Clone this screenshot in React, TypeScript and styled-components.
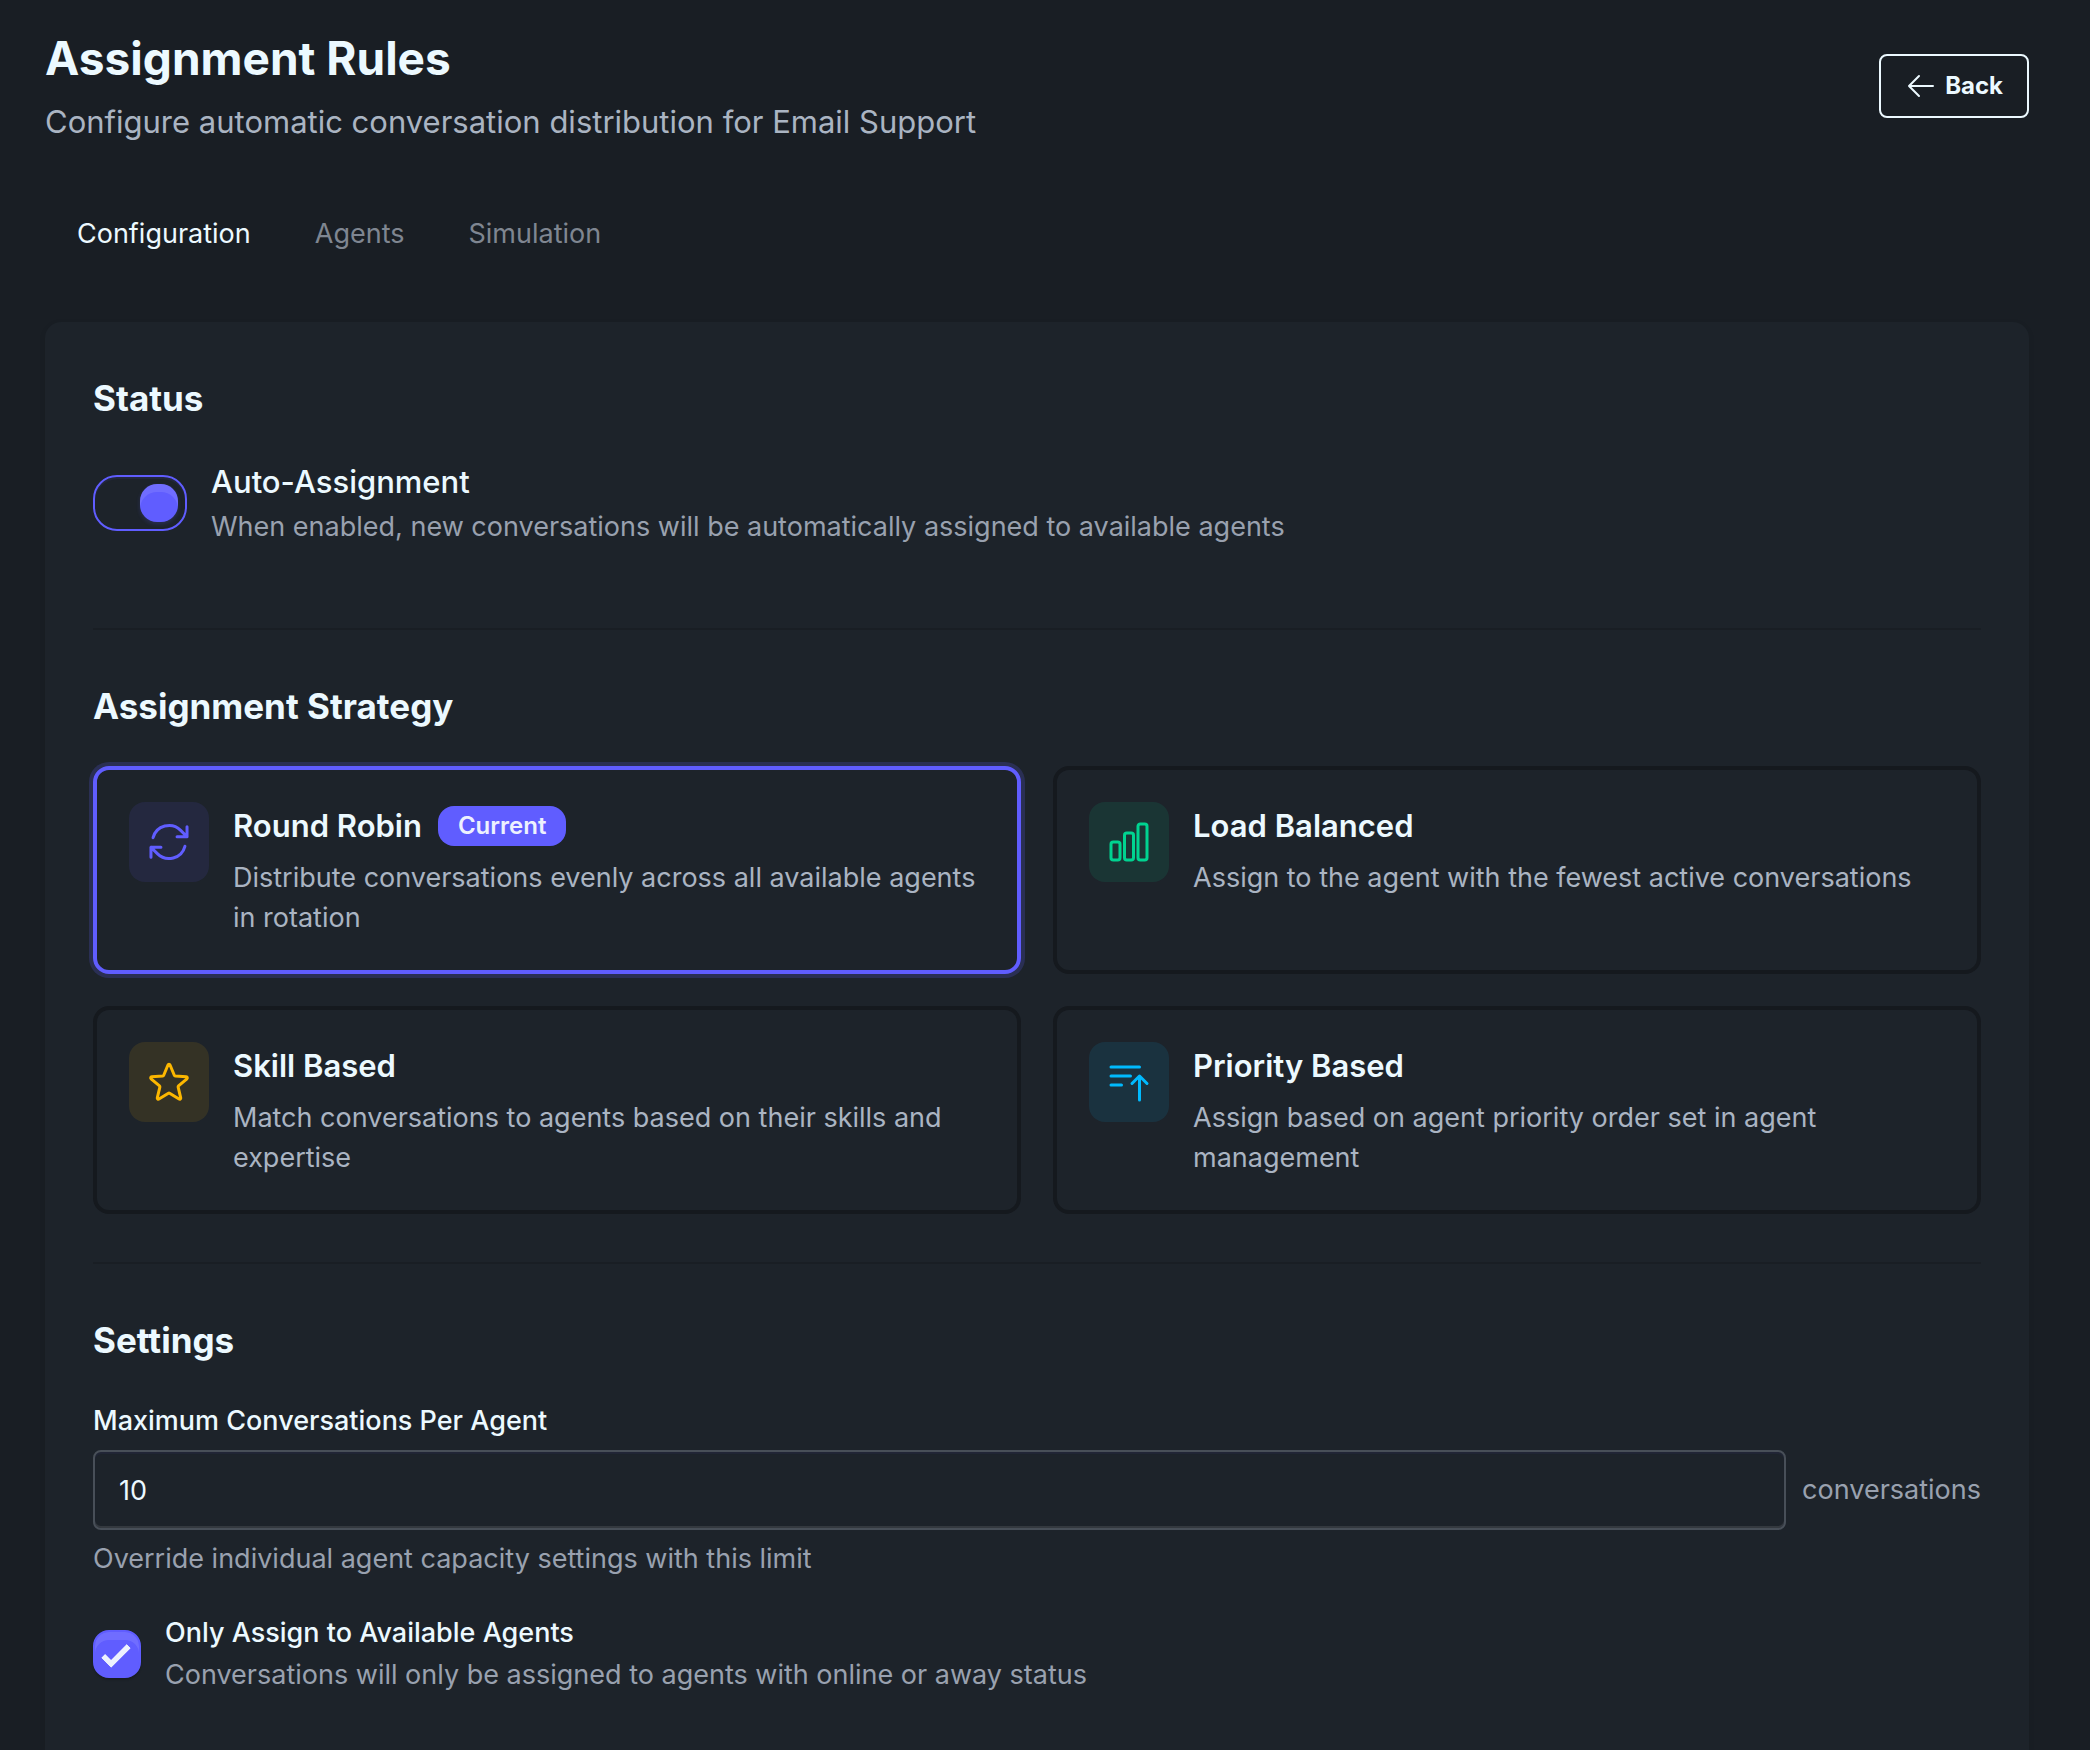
import React, { useState } from "react";
import styled, { createGlobalStyle } from "styled-components";
import {
  HiOutlineArrowLeft,
  HiOutlineArrowPath,
  HiOutlineBarsArrowUp,
  HiOutlineChartBar,
  HiOutlineStar,
} from "react-icons/hi2";

const color = {
  page: "#191e24",
  panel: "#1d232a",
  line: "#191e24",
  outline: "#15191e",
  text: "#ecf9ff",
  soft: "#aab4c2",
  muted: "#99a1af",
  faint: "#7f8691",
  field: "#484f58",
  primary: "#605dff",
};

const GlobalStyle = createGlobalStyle`
  *, *::before, *::after { box-sizing: border-box; }
  body {
    margin: 0;
    background: ${color.page};
    color: ${color.text};
    font-family: Inter, "Liberation Sans", sans-serif;
    font-size: 27px;
    line-height: 42px;
  }
  h1, h2, h3, p { margin: 0; }
  button, input { font: inherit; color: inherit; }
`;

const Page = styled.main`
  display: flex;
  flex-direction: column;
  gap: 48px;
  min-height: 100vh;
  padding: 26px 61px 0 45px;
`;

const Header = styled.header`
  display: flex;
  align-items: center;
  justify-content: space-between;
  gap: 32px;
`;

const Title = styled.h1`
  margin-bottom: 8px;
  font-size: 46px;
  line-height: 64px;
  font-weight: 700;
`;

const Subtitle = styled.p`
  font-size: 31px;
  line-height: 48px;
  color: ${color.soft};
`;

const BackButton = styled.button`
  display: flex;
  align-items: center;
  gap: 8px;
  height: 64px;
  padding: 0 24px;
  border: 2px solid ${color.text};
  border-radius: 8px;
  background: transparent;
  font-size: 24px;
  font-weight: 700;
  cursor: pointer;
`;

const Tabs = styled.nav`
  display: flex;
`;

const Tab = styled.button<{ $active: boolean }>`
  height: 80px;
  padding: 0 32px;
  border: 0;
  background: transparent;
  color: ${(p) => (p.$active ? color.text : color.faint)};
  cursor: pointer;
`;

const Panel = styled.div`
  flex: 1;
  padding: 48px;
  border-radius: 16px 16px 0 0;
  background: ${color.panel};
  box-shadow: 0 2px 6px rgba(0, 0, 0, 0.08);
`;

const Section = styled.section`
  & + & {
    margin-top: 48px;
    padding-top: 48px;
    border-top: 2px solid ${color.line};
  }
`;

const Heading = styled.h2`
  margin-bottom: 32px;
  font-size: 35px;
  line-height: 56px;
  font-weight: 700;
`;

const SwitchRow = styled.div`
  display: flex;
  align-items: center;
  gap: 24px;
  padding-bottom: 32px;
`;

const Switch = styled.input`
  appearance: none;
  flex: none;
  display: grid;
  align-items: center;
  justify-content: start;
  width: 94px;
  height: 56px;
  margin: 0;
  padding: 0 7px;
  border: 2px solid ${color.faint};
  border-radius: 24px;
  box-shadow: inset 0 2px 1px rgba(96, 93, 255, 0.1);
  cursor: pointer;

  &::before {
    content: "";
    width: 38px;
    height: 38px;
    border-radius: 17px;
    background: ${color.faint};
  }

  &:checked {
    justify-content: end;
    border-color: ${color.primary};
  }

  &:checked::before {
    background: ${color.primary};
    box-shadow: inset 0 8px 0 rgba(255, 255, 255, 0.1), 0 2px 4px rgba(96, 93, 255, 0.2);
  }
`;

const SwitchLabel = styled.label`
  display: block;
  font-size: 31px;
  line-height: 48px;
  font-weight: 500;
`;

const Hint = styled.p`
  color: ${color.muted};
`;

const StrategyGrid = styled.div`
  display: grid;
  grid-template-columns: repeat(2, minmax(0, 1fr));
  gap: 32px;
`;

const StrategyCard = styled.button<{ $selected: boolean }>`
  display: flex;
  align-items: flex-start;
  gap: 24px;
  padding: 32px;
  border: 4px solid ${(p) => (p.$selected ? color.primary : color.outline)};
  border-radius: 16px;
  background: transparent;
  box-shadow: ${(p) => (p.$selected ? "0 0 0 4px rgba(96, 93, 255, 0.2)" : "none")};
  text-align: left;
  cursor: pointer;
`;

const IconTile = styled.span<{ $tint: string }>`
  flex: none;
  display: grid;
  place-items: center;
  width: 80px;
  height: 80px;
  border-radius: 16px;
  color: ${(p) => p.$tint};
  background: color-mix(in srgb, ${(p) => p.$tint} 10%, transparent);
`;

const StrategyBody = styled.span`
  display: flex;
  flex-direction: column;
  gap: 8px;
  min-width: 0;
`;

const StrategyName = styled.span`
  display: flex;
  align-items: center;
  gap: 16px;
  font-size: 31px;
  line-height: 48px;
  font-weight: 600;
`;

const Badge = styled.span`
  padding: 0 20px;
  border-radius: 16px;
  background: ${color.primary};
  color: #edf1fe;
  font-size: 24px;
  line-height: 40px;
`;

const StrategyText = styled.span`
  line-height: 40px;
  color: ${color.soft};
`;

const Field = styled.div`
  display: flex;
  flex-direction: column;
  gap: 8px;
  margin-bottom: 32px;
`;

const Label = styled.label`
  display: block;
  font-weight: 500;
`;

const InputRow = styled.div`
  display: flex;
  align-items: center;
  gap: 16px;
`;

const NumberInput = styled.input`
  flex: 1;
  min-width: 0;
  height: 80px;
  padding: 0 24px;
  border: 2px solid ${color.field};
  border-radius: 8px;
  background: transparent;
  box-shadow: inset 0 -2px 0 rgba(255, 255, 255, 0.1), inset 0 2px 1px rgba(96, 93, 255, 0.06);
`;

const Unit = styled.span`
  color: ${color.muted};
`;

const CheckRow = styled.div`
  display: flex;
  align-items: center;
  gap: 24px;
`;

const Checkbox = styled.input`
  appearance: none;
  flex: none;
  display: grid;
  place-items: center;
  width: 48px;
  height: 48px;
  margin: 0;
  border: 2px solid ${color.field};
  border-radius: 16px;
  cursor: pointer;

  &:checked {
    border-color: ${color.primary};
    background: ${color.primary};
    box-shadow: inset 0 8px 0 rgba(255, 255, 255, 0.1), 0 2px 2px rgba(0, 0, 0, 0.2);
  }

  &:checked::before {
    content: "";
    width: 28px;
    height: 28px;
    background: #edf1fe;
    clip-path: polygon(20% 100%, 20% 80%, 50% 80%, 50% 0%, 70% 0%, 70% 100%);
    transform: rotate(45deg);
  }
`;

const tabs = ["Configuration", "Agents", "Simulation"];

const strategies = [
  {
    name: "Round Robin",
    text: "Distribute conversations evenly across all available agents in rotation",
    tint: "#605dff",
    Icon: HiOutlineArrowPath,
  },
  {
    name: "Load Balanced",
    text: "Assign to the agent with the fewest active conversations",
    tint: "#00d390",
    Icon: HiOutlineChartBar,
  },
  {
    name: "Skill Based",
    text: "Match conversations to agents based on their skills and expertise",
    tint: "#fcb700",
    Icon: HiOutlineStar,
  },
  {
    name: "Priority Based",
    text: "Assign based on agent priority order set in agent management",
    tint: "#00bafe",
    Icon: HiOutlineBarsArrowUp,
  },
];

export default function App() {
  const [tab, setTab] = useState("Configuration");
  const [strategy, setStrategy] = useState("Round Robin");

  return (
    <>
      <GlobalStyle />
      <Page>
        <Header>
          <div>
            <Title>Assignment Rules</Title>
            <Subtitle>Configure automatic conversation distribution for Email Support</Subtitle>
          </div>
          <BackButton type="button">
            <HiOutlineArrowLeft size={32} aria-hidden />
            Back
          </BackButton>
        </Header>

        <Tabs>
          {tabs.map((name) => (
            <Tab key={name} type="button" $active={name === tab} onClick={() => setTab(name)}>
              {name}
            </Tab>
          ))}
        </Tabs>

        <Panel>
          <Section>
            <Heading>Status</Heading>
            <SwitchRow>
              <Switch id="auto-assignment" type="checkbox" role="switch" defaultChecked />
              <div>
                <SwitchLabel htmlFor="auto-assignment">Auto-Assignment</SwitchLabel>
                <Hint>
                  When enabled, new conversations will be automatically assigned to available agents
                </Hint>
              </div>
            </SwitchRow>
          </Section>

          <Section>
            <Heading>Assignment Strategy</Heading>
            <StrategyGrid>
              {strategies.map(({ name, text, tint, Icon }) => (
                <StrategyCard
                  key={name}
                  type="button"
                  aria-pressed={name === strategy}
                  $selected={name === strategy}
                  onClick={() => setStrategy(name)}
                >
                  <IconTile $tint={tint}>
                    <Icon size={48} aria-hidden />
                  </IconTile>
                  <StrategyBody>
                    <StrategyName>
                      {name}
                      {name === "Round Robin" && <Badge>Current</Badge>}
                    </StrategyName>
                    <StrategyText>{text}</StrategyText>
                  </StrategyBody>
                </StrategyCard>
              ))}
            </StrategyGrid>
          </Section>

          <Section>
            <Heading>Settings</Heading>
            <Field>
              <Label htmlFor="max-conversations">Maximum Conversations Per Agent</Label>
              <InputRow>
                <NumberInput id="max-conversations" type="text" inputMode="numeric" defaultValue="10" />
                <Unit>conversations</Unit>
              </InputRow>
              <Hint>Override individual agent capacity settings with this limit</Hint>
            </Field>
            <CheckRow>
              <Checkbox id="only-available" type="checkbox" defaultChecked />
              <div>
                <Label htmlFor="only-available">Only Assign to Available Agents</Label>
                <Hint>Conversations will only be assigned to agents with online or away status</Hint>
              </div>
            </CheckRow>
          </Section>
        </Panel>
      </Page>
    </>
  );
}
